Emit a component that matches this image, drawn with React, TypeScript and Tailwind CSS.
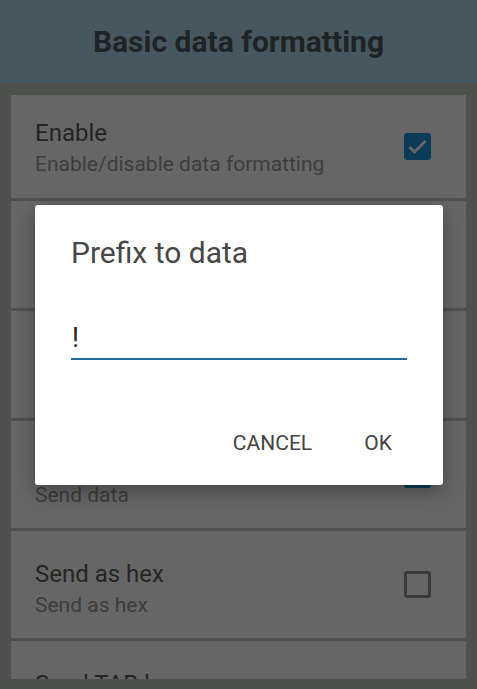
import React from 'react';

type Pref = { title: string; summary: string; checked: boolean };

// rows 2 and 3 sit fully behind the dialog, so they carry no text
const PREFS: Pref[] = [
  { title: 'Enable', summary: 'Enable/disable data formatting', checked: true },
  { title: '', summary: '', checked: false },
  { title: '', summary: '', checked: false },
  { title: 'Send data', summary: 'Send data', checked: true },
  { title: 'Send as hex', summary: 'Send as hex', checked: false },
  { title: 'Send TAB key', summary: 'Send TAB key', checked: false },
];

function CheckBox({ checked }: { checked: boolean }) {
  if (checked) {
    return (
      <div className="w-[27px] h-[27px] rounded-[3px] bg-[#1d95db] flex items-center justify-center shrink-0">
        <svg width="27" height="27" viewBox="0 0 27 27">
          <path d="M5.5 14 L10.5 19 L21.5 8" fill="none" stroke="#ffffff" strokeWidth="3" strokeLinecap="butt" strokeLinejoin="miter" />
        </svg>
      </div>
    );
  }
  return <div className="w-[27px] h-[27px] rounded-[3px] border-[3px] border-[#8e938e] shrink-0" />;
}

function PrefRow({ pref, first }: { pref: Pref; first: boolean }) {
  return (
    <div
      className={
        first
          ? 'h-[103px] shrink-0 bg-white flex items-center pl-[24px] pr-[35px]'
          : 'h-[107px] shrink-0 bg-white flex items-center pl-[24px] pr-[35px]'
      }
    >
      <div className={first ? 'flex-1 mt-[2px]' : 'flex-1 mt-[8px]'}>
        <div className="h-[32px] text-[24px] leading-[32px] text-[#585c58]">{pref.title}</div>
        <div className="h-[30px] text-[21px] leading-[30px] text-[#969b96]">{pref.summary}</div>
      </div>
      <CheckBox checked={pref.checked} />
    </div>
  );
}

export default function App() {
  return (
    <div
      className="relative w-[477px] h-[689px] overflow-hidden bg-[#c5cac3]"
      style={{ fontFamily: 'Roboto, "Noto Sans", sans-serif' }}
    >
      <div className="h-[83px] bg-[#b1d9ed] flex items-center justify-center">
        <h1 className="text-[30px] font-bold leading-none text-[#4b585e]">Basic data formatting</h1>
      </div>

      <div className="h-[596px] overflow-hidden px-[11px] pt-[12px] flex flex-col gap-[3px]">
        {PREFS.map((p, i) => (
          <PrefRow key={i} pref={p} first={i === 0} />
        ))}
      </div>

      {/* dim layer */}
      <div className="absolute inset-0 bg-black/60" />

      {/* dialog */}
      <div className="absolute left-[35px] top-[205px] w-[408px] h-[280px] bg-white rounded-[3px] shadow-[0_6px_20px_rgba(0,0,0,0.35)] flex flex-col">
        <div className="mt-[30px] px-[36px] h-[36px] text-[30px] leading-[36px] text-[#474747]">Prefix to data</div>
        <div className="mt-[51px] mx-[36px] border-b-2 border-[#1f6f9a] pb-[4px]">
          <div className="h-[32px] text-[27px] leading-[32px] text-[#212121] pl-[1px]">!</div>
        </div>
        <div className="mt-[57px] flex justify-end pr-[17px]">
          <button className="w-[115px] h-[54px] text-[21px] text-[#444444] flex items-center justify-center">CANCEL</button>
          <button className="w-[96px] h-[54px] text-[21px] text-[#444444] flex items-center justify-center">OK</button>
        </div>
      </div>
    </div>
  );
}
